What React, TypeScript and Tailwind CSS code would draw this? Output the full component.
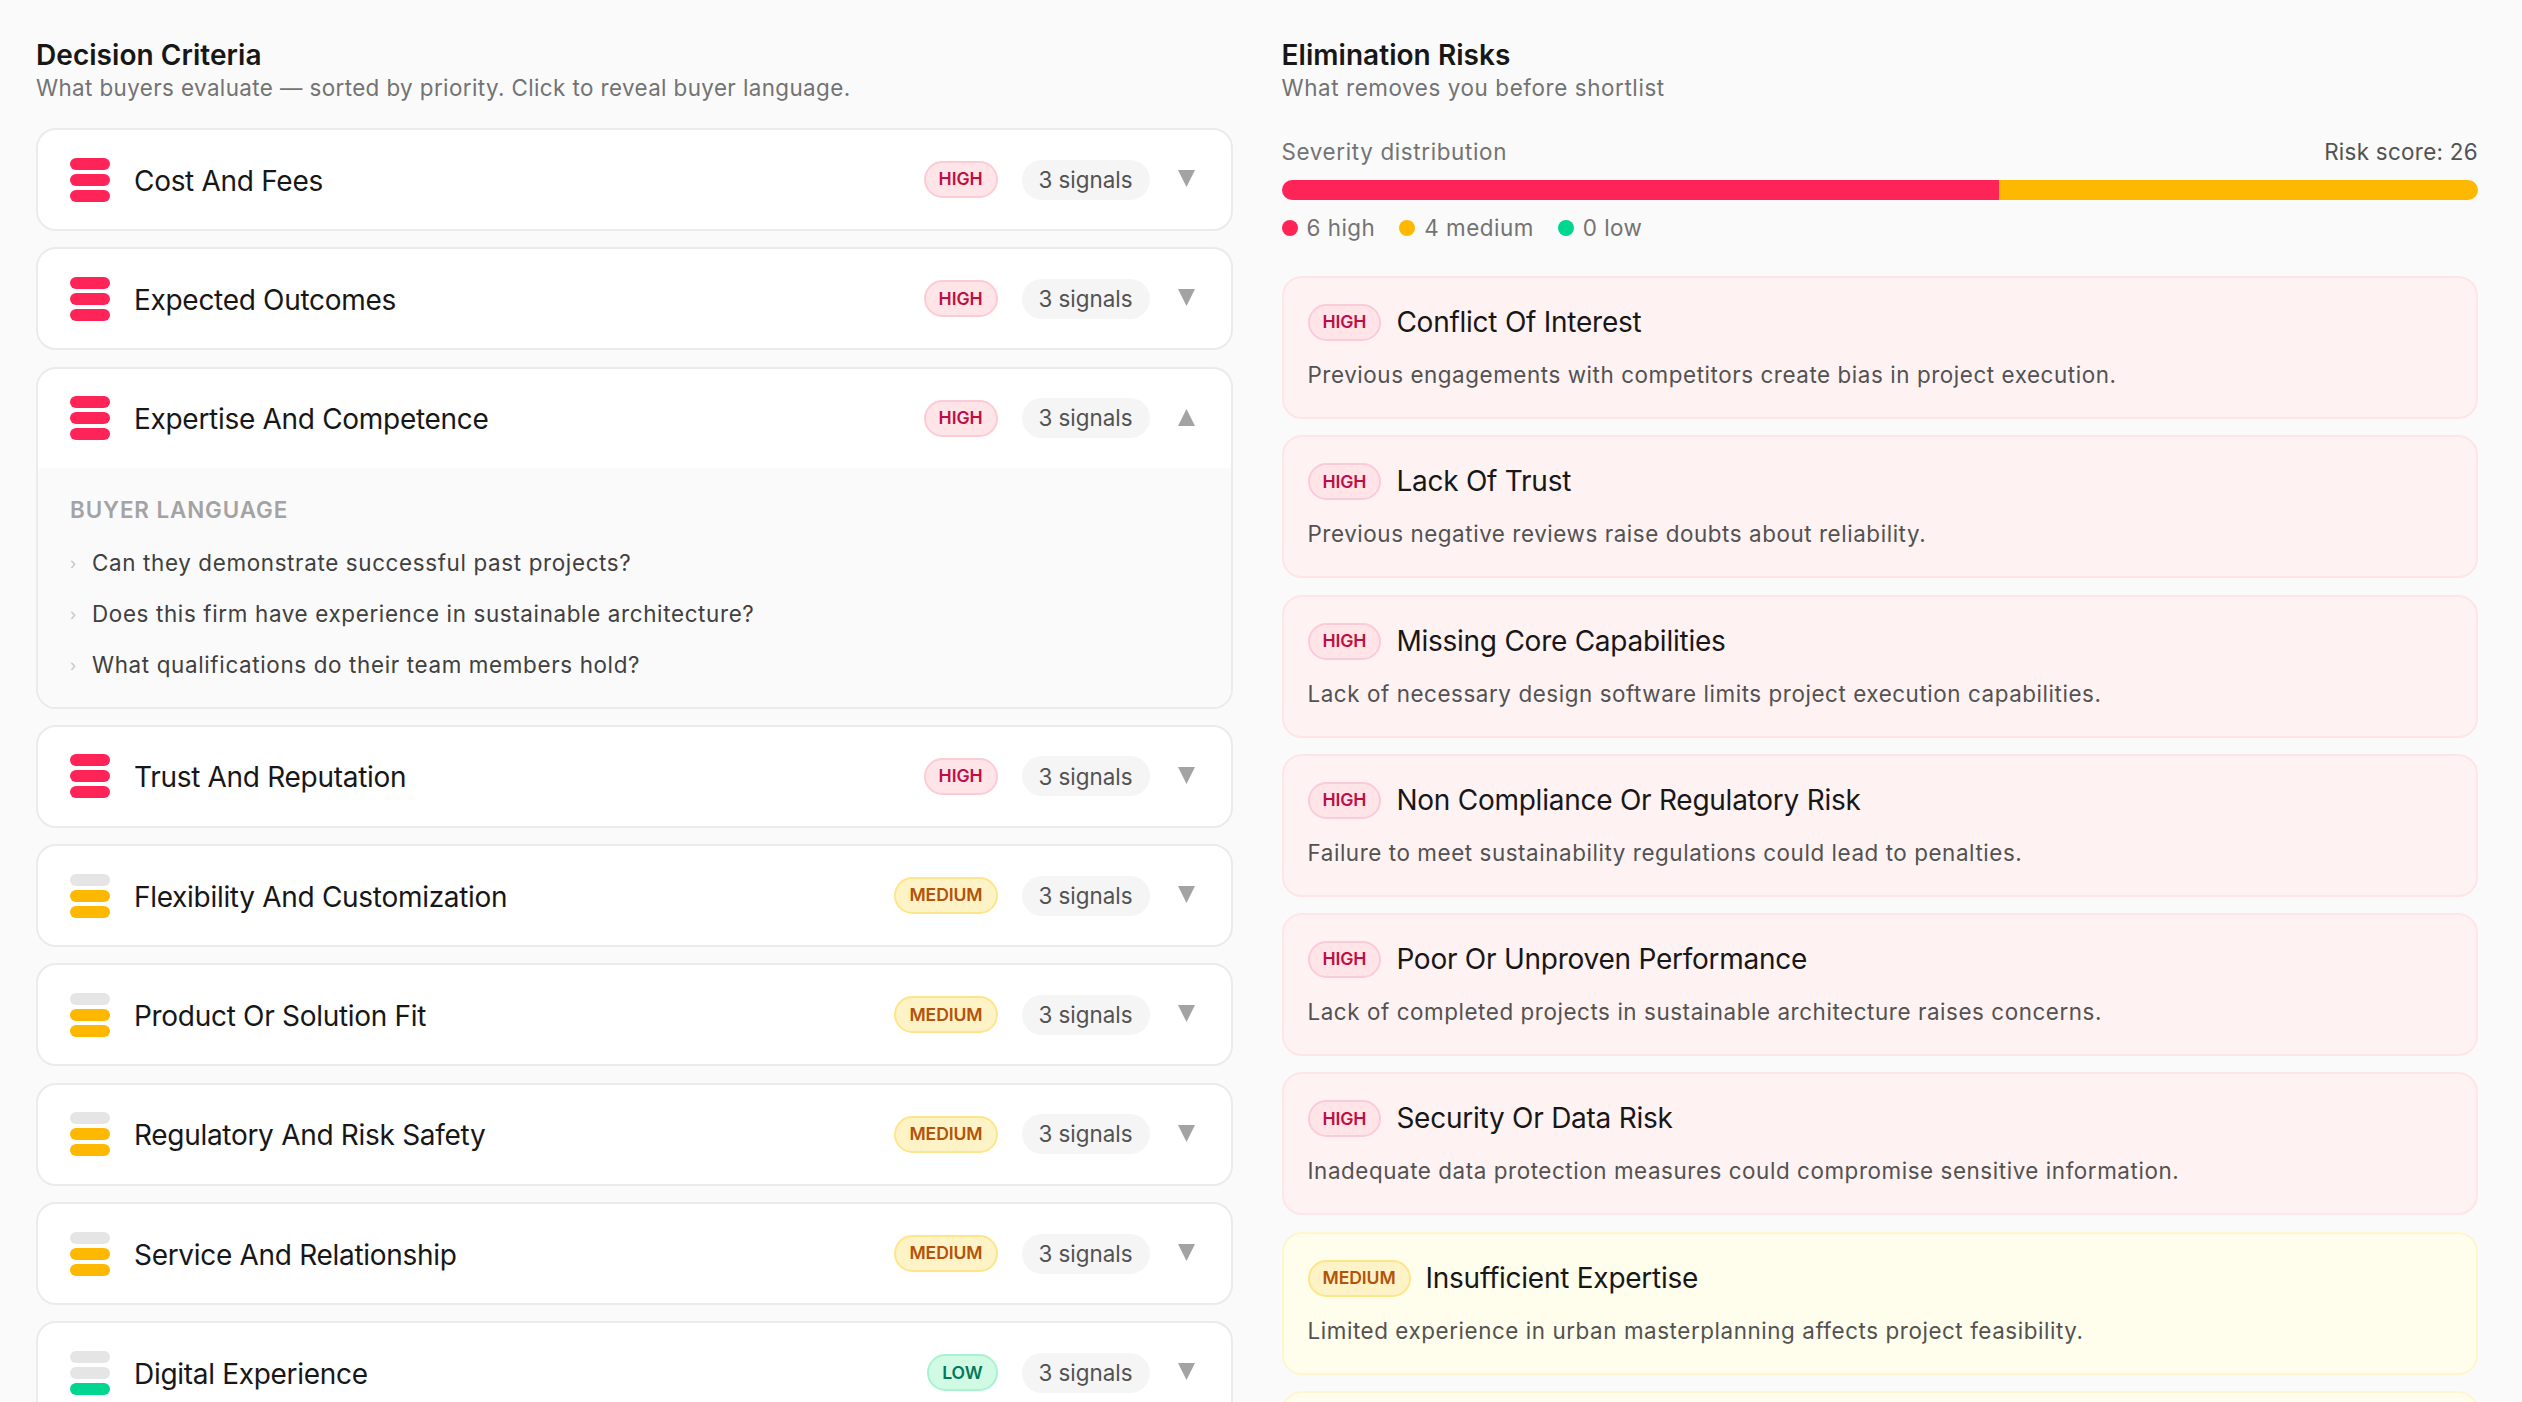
import React from 'react';

type Level = 'high' | 'medium' | 'low';

const criteria: { title: string; level: Level; open?: boolean }[] = [
  { title: 'Cost And Fees', level: 'high' },
  { title: 'Expected Outcomes', level: 'high' },
  { title: 'Expertise And Competence', level: 'high', open: true },
  { title: 'Trust And Reputation', level: 'high' },
  { title: 'Flexibility And Customization', level: 'medium' },
  { title: 'Product Or Solution Fit', level: 'medium' },
  { title: 'Regulatory And Risk Safety', level: 'medium' },
  { title: 'Service And Relationship', level: 'medium' },
  { title: 'Digital Experience', level: 'low' },
];

const risks: { title: string; text: string; level: Level }[] = [
  { title: 'Conflict Of Interest', text: 'Previous engagements with competitors create bias in project execution.', level: 'high' },
  { title: 'Lack Of Trust', text: 'Previous negative reviews raise doubts about reliability.', level: 'high' },
  { title: 'Missing Core Capabilities', text: 'Lack of necessary design software limits project execution capabilities.', level: 'high' },
  { title: 'Non Compliance Or Regulatory Risk', text: 'Failure to meet sustainability regulations could lead to penalties.', level: 'high' },
  { title: 'Poor Or Unproven Performance', text: 'Lack of completed projects in sustainable architecture raises concerns.', level: 'high' },
  { title: 'Security Or Data Risk', text: 'Inadequate data protection measures could compromise sensitive information.', level: 'high' },
  { title: 'Insufficient Expertise', text: 'Limited experience in urban masterplanning affects project feasibility.', level: 'medium' },
];

const questions = [
  'Can they demonstrate successful past projects?',
  'Does this firm have experience in sustainable architecture?',
  'What qualifications do their team members hold?',
];

const badgeStyles: Record<Level, string> = {
  high: 'bg-[#ffe4e8] border-[#fcccd6] text-[#be0f45]',
  medium: 'bg-[#fef3c7] border-[#fde68a] text-[#b45309]',
  low: 'bg-[#d1fae5] border-[#a7f3d0] text-[#047857]',
};

function Badge({ level }: { level: Level }) {
  return (
    <span className={`inline-flex h-[37px] shrink-0 items-center rounded-full border-2 px-[13px] text-[17.6px] font-semibold uppercase tracking-[-0.1px] ${badgeStyles[level]}`}>
      {level}
    </span>
  );
}

// three stacked pills, filled from the bottom according to level
function LevelBars({ level }: { level: Level }) {
  const top = level === 'high' ? 'bg-[#ff2457]' : 'bg-[#e5e5e5]';
  const mid = level === 'high' ? 'bg-[#ff2457]' : level === 'medium' ? 'bg-[#ffb800]' : 'bg-[#e5e5e5]';
  const bottom = level === 'high' ? 'bg-[#ff2457]' : level === 'medium' ? 'bg-[#ffb800]' : 'bg-[#00d68f]';
  return (
    <div className="flex w-[40px] shrink-0 flex-col gap-[4px]">
      <div className={`h-[12px] rounded-full ${top}`} />
      <div className={`h-[12px] rounded-full ${mid}`} />
      <div className={`h-[12px] rounded-full ${bottom}`} />
    </div>
  );
}

function Caret({ up }: { up?: boolean }) {
  return (
    <svg width="17" height="17" viewBox="0 0 17 17" className="mb-[2px] ml-[28px] shrink-0 fill-[#a3a3a3]">
      <polygon points={up ? '8.5,0 17,17 0,17' : '0,0 17,0 8.5,17'} />
    </svg>
  );
}

function CriteriaCard({ title, level, open }: { title: string; level: Level; open?: boolean }) {
  return (
    <div className="overflow-hidden rounded-[20px] border-2 border-[#ebebeb] bg-white">
      <div className="flex h-[99px] items-center pl-[32px] pr-[36px]">
        <LevelBars level={level} />
        <div className="ml-[24px] flex-1 pt-[2px] text-[28px] tracking-[-0.3px] text-[#171717]">{title}</div>
        <Badge level={level} />
        <span className="ml-[24px] flex h-[40px] w-[128px] items-center justify-center rounded-full bg-[#f5f5f5] text-[22.4px] text-[#525252]">
          3 signals
        </span>
        <Caret up={open} />
      </div>
      {open && (
        <div className="bg-[#fafafa] pb-[26px] pl-[32px] pr-[36px] pt-[26px]">
          <div className="text-[22.4px] font-semibold uppercase leading-[32px] tracking-[0.9px] text-[#a3a3a3]">Buyer language</div>
          <div className="mt-[21px] flex flex-col gap-[19px]">
            {questions.map(q => (
              <div key={q} className="flex text-[22.4px] leading-[32px] tracking-[0.65px] text-[#404040]">
                <span className="w-[22px] text-[16px] text-[#c4c4c4]">›</span>
                {q}
              </div>
            ))}
          </div>
        </div>
      )}
    </div>
  );
}

function RiskCard({ title, text, level }: { title: string; text: string; level: Level }) {
  const tone = level === 'high' ? 'bg-[#fff2f3] border-[#ffe4e8]' : 'bg-[#fffdeb] border-[#fef6cf]';
  return (
    <div className={`rounded-[20px] border-2 px-[24px] pb-[26px] pt-[26px] ${tone}`}>
      <div className="flex items-center gap-[15px]">
        <Badge level={level} />
        <div className="text-[28px] leading-[37px] tracking-[-0.25px] text-[#171717]">{title}</div>
      </div>
      <p className="mt-[18px] text-[22.4px] leading-[32px] tracking-[0.57px] text-[#525252]">{text}</p>
    </div>
  );
}

function Dot({ color, label }: { color: string; label: string }) {
  return (
    <span className="flex items-center gap-[9px]">
      <span className={`h-[16px] w-[16px] rounded-full ${color}`} />
      {label}
    </span>
  );
}

export default function App() {
  return (
    <div className="h-screen overflow-hidden bg-[#fafafa] font-[Inter,sans-serif]">
      <div className="grid grid-cols-2 gap-[49px] pl-[36px] pr-[44px] pt-[38px]">
        {/* Decision criteria */}
        <section>
          <h2 className="text-[28px] font-semibold leading-[34px] tracking-[0.05px] text-[#171717]">Decision Criteria</h2>
          <p className="text-[22.4px] leading-[32px] tracking-[0.4px] text-[#737373]">
            What buyers evaluate — sorted by priority. Click to reveal buyer language.
          </p>
          <div className="mt-[24px] flex flex-col gap-[16.3px]">
            {criteria.map(c => (
              <CriteriaCard key={c.title} {...c} />
            ))}
          </div>
        </section>

        {/* Elimination risks */}
        <section>
          <h2 className="text-[28px] font-semibold leading-[34px] tracking-[0.05px] text-[#171717]">Elimination Risks</h2>
          <p className="text-[22.4px] leading-[32px] tracking-[0.6px] text-[#737373]">What removes you before shortlist</p>

          <div className="mt-[32px] flex justify-between text-[22.4px] leading-[32px]">
            <span className="tracking-[0.65px] text-[#737373]">Severity distribution</span>
            <span className="tracking-[0.3px] text-[#525252]">Risk score: 26</span>
          </div>
          <div className="mt-[12px] flex h-[20px] overflow-hidden rounded-full">
            <div className="w-[60%] bg-[#ff2457]" />
            <div className="flex-1 bg-[#ffb800]" />
          </div>
          <div className="mt-[12px] flex gap-[24px] text-[22.4px] leading-[32px] tracking-[0.5px] text-[#737373]">
            <Dot color="bg-[#ff2457]" label="6 high" />
            <Dot color="bg-[#ffb800]" label="4 medium" />
            <Dot color="bg-[#00d68f]" label="0 low" />
          </div>

          <div className="mt-[32px] flex flex-col gap-[16.3px]">
            {risks.map(r => (
              <RiskCard key={r.title} {...r} />
            ))}
            <div className="h-[143px] rounded-[20px] border-2 border-[#fef6cf] bg-[#fffdeb]" />
          </div>
        </section>
      </div>
    </div>
  );
}
